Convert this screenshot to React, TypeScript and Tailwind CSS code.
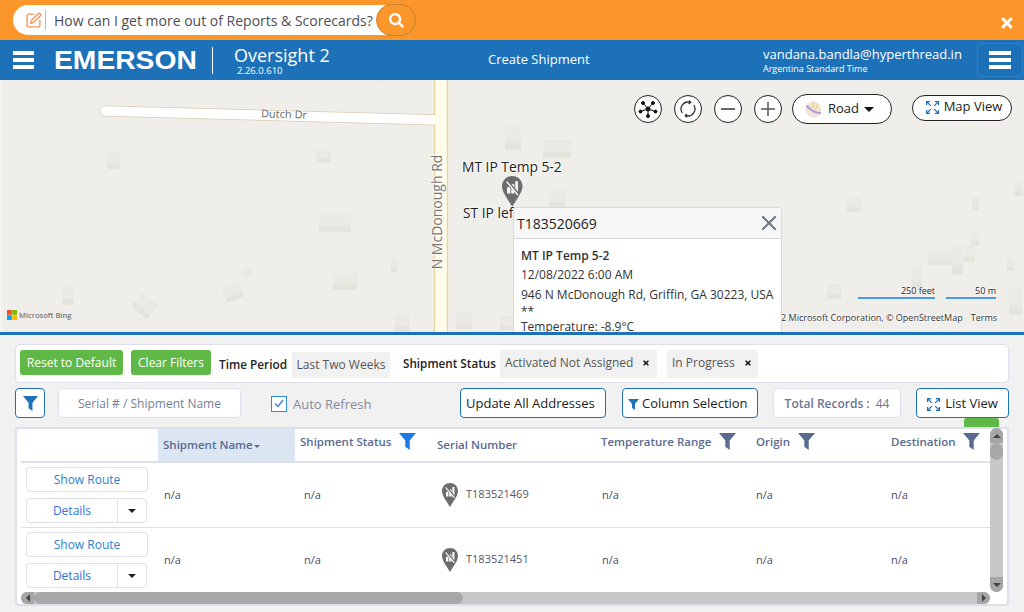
import { FaSearch, FaTimes } from "react-icons/fa";
import { SquarePen, X } from "lucide-react";

const buildings = [
  [107, 72, 13, 17], [316, 70, 15, 13], [319, 134, 32, 18], [391, 179, 7, 13], [333, 193, 24, 17],
  [62, 207, 12, 18], [395, 234, 14, 18], [456, 232, 16, 17], [500, 236, 14, 14], [505, 47, 16, 23],
  [543, 60, 28, 18], [549, 110, 17, 18], [847, 117, 14, 15], [972, 117, 7, 14], [1014, 101, 9, 15],
  [971, 151, 8, 15], [964, 165, 11, 17], [928, 169, 28, 16], [952, 165, 11, 30], [1007, 178, 7, 13],
  [912, 186, 10, 23], [827, 204, 14, 15], [1009, 208, 13, 27], [378, 0, 8, 2],
];

const halo = "[text-shadow:0_0_2px_#fff,0_0_2px_#fff,0_0_3px_#fff]";

const Hamburger = () => (
  <div className="flex flex-col gap-[3px]">
    <div className="h-[4px] w-[21px] bg-white" />
    <div className="h-[4px] w-[21px] bg-white" />
    <div className="h-[4px] w-[21px] bg-white" />
  </div>
);

const Pin = ({ size = 16 }: { size?: number }) => (
  <svg width={size} height={size * 1.5} viewBox="0 0 20 30">
    <path d="M10 0C4.4 0 0 4.4 0 10c0 6 6 13 10 20 4-7 10-14 10-20C20 4.4 15.600 0 10 0z" fill="#6d6d6d" />
    <path d="M5 11h3v6H5zM9 8h3v9H9zM13 5h2.500v12H13z" fill="#fff" />
    <path d="M5 5l11 13" stroke="#6d6d6d" strokeWidth="2.800" />
    <path d="M4.500 5.500l11 13" stroke="#fff" strokeWidth="1.300" />
  </svg>
);

const ExpandIcon = () => (
  <svg width="13" height="13" viewBox="0 0 13 13" fill="none" stroke="#1d71b8" strokeWidth="1.200">
    <path d="M.6 4V.6H4M9 .6h3.400V4M12.400 9v3.400H9M4 12.400H.6V9" />
    <path d="M1 1l3.800 3.800M12 1L8.200 4.800M12 12L8.200 8.200M1 12l3.800-3.800" />
  </svg>
);

const Funnel = ({ color = "#5a6b90", size = 17 }: { color?: string; size?: number }) => (
  <svg width={size} height={size} viewBox="0 0 17 17">
    <path d="M0 0h17l-6.300 7.600V17l-4.400-3.200V7.600z" fill={color} />
  </svg>
);

const MapButton = ({ children }: { children: React.ReactNode }) => (
  <div className="flex h-[28px] w-[28px] items-center justify-center rounded-full border border-[#222] bg-white">
    {children}
  </div>
);

const Row = ({ serial }: { serial: string }) => (
  <div className="grid h-[65px] grid-cols-[137px_137px_142px_164px_154px_135px_1fr] items-center border-b border-[#dde0ea] text-[11px] text-[#4a4a6a]">
    <div className="flex flex-col gap-[6px] self-start pl-[5px] pt-[4px] text-[12px]">
      <div className="flex h-[25px] w-[122px] items-center justify-center rounded-[4px] border border-[#dde0ea] bg-white text-[#2f7fd0]">
        Show Route
      </div>
      <div className="flex h-[25px] w-[121px] items-center rounded-[4px] border border-[#dde0ea] bg-white text-[#2f6fd8]">
        <div className="flex h-full w-[91px] items-center justify-center border-r border-[#dde0ea]">Details</div>
        <div className="flex flex-1 justify-center">
          <div className="h-0 w-0 border-x-[4px] border-t-[4px] border-x-transparent border-t-[#222]" />
        </div>
      </div>
    </div>
    <div className="pl-[6px]">n/a</div>
    <div className="pl-[9px]">n/a</div>
    <div className="flex items-center gap-[8px] pl-[5px]">
      <Pin />
      <span className="-mt-[2px] text-[#556]">{serial}</span>
    </div>
    <div className="pl-[1px]">n/a</div>
    <div className="pl-[1px]">n/a</div>
    <div className="pl-[1px]">n/a</div>
  </div>
);

const App = () => {
  return (
    <div className="flex h-[612px] w-[1024px] flex-col overflow-hidden bg-[#f1f1f1] font-['Open_Sans',sans-serif]">
      {/* ask bar */}
      <div className="relative flex h-[40px] shrink-0 items-center bg-[#fb962b] pl-[13px]">
        <div className="flex h-[30px] w-[387px] items-center rounded-l-full rounded-r-[16px] bg-white pl-[12px]">
          <SquarePen className="text-[#f7955a]" size={17} strokeWidth={2} />
          <div className="ml-[3px] h-[20px] w-px bg-[#f7a56e]" />
          <span className="ml-[8px] whitespace-nowrap text-[14px] text-[#4d4d57]">
            How can I get more out of Reports &amp; Scorecards?
          </span>
        </div>
        <div className="-ml-[24px] flex h-[32px] w-[40px] items-center justify-center rounded-full border border-[#c68233] bg-[#fb962b]">
          <FaSearch className="text-white" size={15} />
        </div>
        <FaTimes className="absolute right-[9px] top-[15px] text-white" size={16} />
      </div>

      {/* header */}
      <div className="flex h-[40px] shrink-0 items-center bg-[#1d71b8] pl-[13px] text-white">
        <Hamburger />
        <div className="ml-[20px] flex w-[158px] items-start">
          <span className="origin-left scale-x-[1.13] font-['Liberation_Sans',sans-serif] text-[25px] font-bold leading-none">EMERSON</span>
        </div>
        <div className="h-[27px] w-px bg-white" />
        <div className="ml-[21px] flex w-[254px] flex-col">
          <span className="text-[18px] leading-[20px]">Oversight 2</span>
          <span className="ml-[3px] text-[9.500px] leading-[11px]">2.26.0.610</span>
        </div>
        <span className="w-[275px] text-[13px]">Create Shipment</span>
        <div className="flex w-[214px] flex-col">
          <span className="text-[13px] leading-[18px]">vandana.bandla@hyperthread.in</span>
          <span className="text-[9px] leading-[12px]">Argentina Standard Time</span>
        </div>
        <div className="flex h-[34px] w-[46px] items-center justify-center rounded-[4px] border border-[#2f83c8]">
          <div className="flex flex-col gap-[3px]">
            <div className="h-[4px] w-[22px] bg-white" />
            <div className="h-[4px] w-[22px] bg-white" />
            <div className="h-[4px] w-[22px] bg-white" />
          </div>
        </div>
      </div>

      {/* map */}
      <div className="relative h-[252px] shrink-0 overflow-hidden bg-[#efeeeb]">
        <svg className="absolute inset-0" width="1024" height="252">
          <rect x="0" y="0" width="2" height="252" fill="#f6f5f3" />
          {buildings.map(([x, y, w, h]) => (
            <g key={`${x}-${y}`}>
              <rect x={x} y={y} width={w} height={h} fill="#ebe9e4" />
              <rect x={x} y={y + h * 0.68} width={w} height={h * 0.32} fill="#e5e3dc" />
            </g>
          ))}
          <g transform="rotate(-20 233 213)">
            <rect x="224" y="205" width="18" height="15" fill="#ebe9e4" />
            <rect x="224" y="216" width="18" height="4" fill="#e5e3dc" />
          </g>
          <g transform="rotate(-25 247 193)">
            <rect x="243" y="188" width="9" height="10" fill="#ebe9e4" />
          </g>
          <g transform="rotate(40 144 225)">
            <rect x="135" y="216" width="20" height="18" fill="#ebe9e4" />
            <rect x="135" y="229" width="20" height="5" fill="#e5e3dc" />
          </g>
          <line x1="105" y1="31" x2="440" y2="40" stroke="#d8ccb0" strokeWidth="11" strokeLinecap="round" />
          <line x1="105" y1="31" x2="440" y2="40" stroke="#fff" strokeWidth="9.500" strokeLinecap="round" />
          <rect x="434" y="0" width="14" height="252" fill="#fffbe9" />
          <line x1="434.500" y1="0" x2="434.500" y2="35" stroke="#e8d49f" strokeWidth="1.300" />
          <line x1="434.500" y1="45" x2="434.500" y2="252" stroke="#e8d49f" strokeWidth="1.300" />
          <line x1="447.500" y1="0" x2="447.500" y2="252" stroke="#e8d49f" strokeWidth="1.300" />
        </svg>

        <span className={`absolute left-[261px] top-[26px] rotate-[2deg] text-[11px] text-[#666] ${halo}`}>Dutch Dr</span>
        <span className={`absolute left-[378px] top-[123px] w-[118px] -rotate-90 whitespace-nowrap text-center text-[14px] leading-[18px] text-[#777] ${halo}`}>
          N McDonough Rd
        </span>

        <span className={`absolute left-[462px] top-[78px] whitespace-nowrap text-[13.800px] leading-[18px] text-[#222] ${halo}`}>MT IP Temp 5-2</span>
        <span className={`absolute left-[463px] top-[124px] whitespace-nowrap text-[13.800px] leading-[18px] text-[#222] ${halo}`}>ST IP left</span>
        <div className="absolute left-[502px] top-[96px]">
          <Pin size={20.500} />
        </div>

        <div className="absolute bottom-[12px] left-[7px] flex items-center gap-[2px]">
          <svg width="10" height="10" viewBox="0 0 10 10">
            <rect width="4.800" height="4.800" fill="#f25022" />
            <rect x="5.200" width="4.800" height="4.800" fill="#7fba00" />
            <rect y="5.200" width="4.800" height="4.800" fill="#00a4ef" />
            <rect x="5.200" y="5.200" width="4.800" height="4.800" fill="#ffb900" />
          </svg>
          <span className="text-[7.500px] font-semibold leading-[10px] text-[#777]">Microsoft Bing</span>
        </div>

        {/* scale + copyright */}
        <div className="absolute right-[28px] top-[205px] flex gap-[11px] text-[9px] leading-[12px] text-[#222]">
          <div className={`w-[77px] border-b-2 border-[#4a9bf0] text-right ${halo}`}>250 feet</div>
          <div className={`w-[50px] border-b-2 border-[#4a9bf0] text-right ${halo}`}>50 m</div>
        </div>
        <div className={`absolute bottom-[8px] right-[27px] flex gap-[8px] whitespace-nowrap text-[9px] leading-[12px] text-[#333] ${halo}`}>
          <span>© 2022 Microsoft Corporation, © OpenStreetMap</span>
          <span>Terms</span>
        </div>

        {/* map controls */}
        <div className="absolute left-[634px] top-[14px] flex items-center gap-[12px]">
          <MapButton>
            <svg width="20" height="20" viewBox="0 0 20 20" stroke="#111" strokeWidth="1" fill="#111">
              <path d="M10 10L5 4M10 10L15 4M10 10L2.500 12.500M10 10L17.500 12.500M10 10V17" />
              <circle cx="10" cy="10" r="2.100" />
              <circle cx="5" cy="4" r="1.500" />
              <circle cx="15" cy="4" r="1.500" />
              <circle cx="2.500" cy="12.500" r="1.500" />
              <circle cx="17.500" cy="12.500" r="1.500" />
              <circle cx="10" cy="17" r="1.500" />
            </svg>
          </MapButton>
          <MapButton>
            <svg width="18" height="18" viewBox="0 0 18 18" fill="none" stroke="#333" strokeWidth="1.300">
              <path d="M3.300 13A7 7 0 0 1 10.500 2.200" />
              <path d="M14.700 5A7 7 0 0 1 7.500 15.800" />
              <path d="M10 .6l1.800 1.700L9.800 4M8 14l-1.800 1.700L8 17.400" fill="#333" />
            </svg>
          </MapButton>
          <MapButton>
            <div className="h-[2px] w-[14px] bg-[#666]" />
          </MapButton>
          <MapButton>
            <svg width="14" height="14" viewBox="0 0 14 14" stroke="#555" strokeWidth="1.500">
              <path d="M0 7h14M7 0v14" />
            </svg>
          </MapButton>
          <div className="-ml-[2px] flex h-[30px] w-[100px] items-center rounded-full border border-[#222] bg-white pl-[12px] text-[13px] text-[#222]">
            <svg width="17" height="17" viewBox="0 0 17 17">
              <circle cx="8.500" cy="8.500" r="8" fill="#efe6d6" />
              <path d="M1 5c4 1 5 7 15 7" stroke="#b49ad2" strokeWidth="2" fill="none" />
              <path d="M9 1l-2 6M13 3l-3 6" stroke="#f0c66e" strokeWidth="1" fill="none" />
            </svg>
            <span className="ml-[6px]">Road</span>
            <div className="ml-[5px] h-0 w-0 border-x-[5px] border-t-[5px] border-x-transparent border-t-[#111]" />
          </div>
          <div className="ml-[8px] -mt-[3px] flex h-[26px] w-[100px] items-center justify-center gap-[5px] rounded-full border border-[#222] bg-white pb-[1px] pl-[4px] text-[13px] text-[#222]">
            <ExpandIcon />
            Map View
          </div>
        </div>

        {/* popup */}
        <div className="absolute left-[513px] top-[127px] w-[269px] rounded-t-[4px] border border-[#d8d8d8] bg-white">
          <div className="flex h-[31px] items-center justify-between border-b border-[#d8d8d8] bg-[#f7f7f7] pl-[3px] text-[14px] text-[#222]">
            <span>T183520669</span>
            <X className="text-[#6f7a88]" size={24} strokeWidth={2.2} />
          </div>
          <div className="pl-[7px] pt-[7px] text-[12px] leading-[19.400px] text-[#333]">
            <div className="font-semibold">MT IP Temp 5-2</div>
            <div>12/08/2022 6:00 AM</div>
            <div className="whitespace-nowrap">946 N McDonough Rd, Griffin, GA 30223, USA</div>
            <div className="-mt-[2px] h-[15px]">**</div>
            <div>Temperature: -8.9°C</div>
          </div>
        </div>
      </div>
      <div className="h-[3px] shrink-0 bg-[#1d71b8]" />

      {/* filters */}
      <div className="flex flex-1 flex-col px-[15px] pt-[9px]">
        <div className="flex h-[39px] items-center rounded-[5px] border border-[#dde0ea] bg-white pl-[4px] text-[12px]">
          <div className="-mt-[2px] flex h-[25px] w-[103px] items-center justify-center rounded-[3px] bg-[#60b946] text-white">Reset to Default</div>
          <div className="-mt-[2px] ml-[8px] flex h-[25px] w-[80px] items-center justify-center rounded-[3px] bg-[#60b946] text-white">Clear Filters</div>
          <span className="ml-[8px] mt-[2px] w-[73px] text-[11.800px] font-semibold text-[#222]">Time Period</span>
          <div className="mt-[3px] flex h-[26px] w-[98px] items-center justify-center bg-[#f1f1f1] text-[#555]">Last Two Weeks</div>
          <span className="ml-[13px] w-[97px] whitespace-nowrap text-[11.700px] font-semibold text-[#222]">Shipment Status</span>
          <div className="mt-[1px] flex h-[28px] w-[157px] items-center bg-[#f1f1f1] pb-[3px] pl-[5px] text-[#555]">
            Activated Not Assigned
            <FaTimes className="ml-[9px] text-[#111]" size={8} />
          </div>
          <div className="ml-[10px] mt-[1px] flex h-[28px] w-[91px] items-center bg-[#f1f1f1] pb-[3px] pl-[5px] text-[#555]">
            In Progress
            <FaTimes className="ml-[9px] text-[#111]" size={8} />
          </div>
        </div>

        <div className="relative mt-[5px] flex h-[30px] items-center text-[13px]">
          <div className="flex h-[30px] w-[30px] items-center justify-center rounded-[4px] border border-[#1d71b8] bg-white">
            <Funnel color="#1d71b8" size={15} />
          </div>
          <div className="ml-[13px] flex h-[30px] w-[183px] items-center justify-center rounded-[4px] border border-[#dde0ea] bg-white pt-[1px] text-[12px] text-[#77809a]">
            Serial # / Shipment Name
          </div>
          <div className="ml-[30px] mt-[1px] flex h-[16px] w-[16px] items-center justify-center border border-[#2f8ae0] bg-white">
            <svg width="10" height="9" viewBox="0 0 10 9" fill="none" stroke="#2f7fd0" strokeWidth="1.300">
              <path d="M1 4.500L4 7.500 9 1" />
            </svg>
          </div>
          <span className="ml-[6px] mt-[3px] w-[78px] whitespace-nowrap text-[#858a9c]">Auto Refresh</span>
          <div className="ml-[89px] flex h-[30px] w-[146px] items-center rounded-[4px] border border-[#1d71b8] bg-white pl-[5px] pt-[2px] text-[#222]">
            Update All Addresses
          </div>
          <div className="ml-[16px] flex h-[30px] w-[136px] items-center gap-[3px] rounded-[4px] border border-[#1d71b8] bg-white pl-[5px] pt-[2px] text-[#222]">
            <Funnel color="#1d71b8" size={11} />
            Column Selection
          </div>
          <div className="ml-[15px] flex h-[30px] w-[128px] items-center justify-center gap-[6px] rounded-[4px] border border-[#dde0ea] bg-white pt-[2px] text-[12px] text-[#6a7590]">
            <span className="font-semibold">Total Records :</span>
            <span>44</span>
          </div>
          <div className="ml-[15px] flex h-[30px] w-[93px] items-center justify-center gap-[5px] rounded-[4px] border border-[#1d71b8] bg-white pt-[2px] text-[#222]">
            <ExpandIcon />
            List View
          </div>
          <div className="absolute right-[10px] top-[30px] h-[9px] w-[35px] rounded-t-[3px] bg-[#60b946]" />
        </div>

        {/* table */}
        <div className="mt-[9px] flex h-[179px] flex-col rounded-[4px] border-2 border-[#dde0ea] bg-white">
          <div className="flex h-[163px]">
            <div className="min-w-0 flex-1 overflow-hidden pl-[4px]">
              <div className="grid h-[34px] grid-cols-[137px_137px_142px_164px_154px_135px_1fr] items-center border-b-2 border-[#dde0ea] text-[11.500px] font-semibold text-[#5a6b90]">
                <div />
                <div className="flex h-full items-center bg-[#dce6f3] pl-[5px]">
                  Shipment Name
                  <div className="ml-px mt-[3px] h-0 w-0 border-x-[3.500px] border-t-[3.500px] border-x-transparent border-t-[#5a6b90]" />
                </div>
                <div className="-mt-[7px] flex items-center gap-[8px] pl-[5px]">
                  Shipment Status
                  <Funnel color="#1b7be0" />
                </div>
                <div>Serial Number</div>
                <div className="-mt-[7px] flex items-center gap-[8px]">
                  Temperature Range
                  <Funnel />
                </div>
                <div className="-mt-[7px] flex items-center gap-[8px] pl-[1px]">
                  Origin
                  <Funnel />
                </div>
                <div className="-mt-[7px] flex items-center gap-[8px] pl-[1px]">
                  Destination
                  <Funnel />
                </div>
              </div>
              <Row serial="T183521469" />
              <Row serial="T183521451" />
            </div>
            <div className="-mt-px flex w-[13px] flex-col rounded-full bg-[#c8c8c8]">
              <div className="flex h-[15px] items-center justify-center rounded-t-full bg-[#a6a6a6]">
                <div className="h-0 w-0 border-x-[4px] border-b-[4px] border-x-transparent border-b-[#444]" />
              </div>
              <div className="h-[17px] rounded-full bg-[#a8a8a8]" />
              <div className="flex-1" />
              <div className="flex h-[15px] items-center justify-center rounded-b-full bg-[#a6a6a6]">
                <div className="h-0 w-0 border-x-[4px] border-t-[4px] border-x-transparent border-t-[#444]" />
              </div>
            </div>
            <div className="w-[4px]" />
          </div>
          <div className="ml-[4px] mr-[17px] flex h-[13px] rounded-full bg-[#c8c8c8]">
            <div className="flex w-[13px] items-center justify-center rounded-l-full bg-[#a6a6a6]">
              <div className="h-0 w-0 border-y-[4px] border-r-[4px] border-y-transparent border-r-[#444]" />
            </div>
            <div className="w-[429px] rounded-full bg-[#a8a8a8]" />
            <div className="flex-1" />
            <div className="flex w-[13px] items-center justify-center rounded-r-full bg-[#a6a6a6]">
              <div className="h-0 w-0 border-y-[4px] border-l-[4px] border-y-transparent border-l-[#444]" />
            </div>
          </div>
        </div>
      </div>
    </div>
  );
};

export default App;
